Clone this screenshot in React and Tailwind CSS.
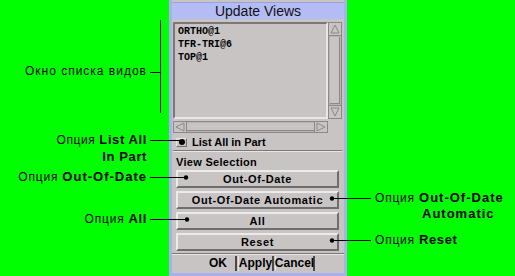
import React from "react";

const lav = "bg-[#b4bcf6]";

function Btn({ children }) {
  return (
    <div className="h-[18px] mx-[3px] flex items-center justify-center bg-[#c8c4c4] border-t-2 border-l-2 border-t-[#ecebeb] border-l-[#ecebeb] border-b-2 border-r-2 border-b-[#6f6d6d] border-r-[#6f6d6d] text-[11px] font-bold tracking-[0.6px] text-black">
      {children}
    </div>
  );
}

function Arrow({ dir }) {
  const pts = {
    up: "2,10 6,2 10,10",
    down: "2,2 6,10 10,2",
    left: "10,2 2,6 10,10",
    right: "2,2 10,6 2,10",
  }[dir];
  return (
    <svg width="12" height="12" viewBox="0 0 12 12">
      <polygon points={pts} fill="#c8c4c4" stroke="#8a8888" strokeWidth="1" />
    </svg>
  );
}

export default function App() {
  return (
    <div
      className="relative w-[515px] h-[276px] bg-[#00ff00] flex overflow-hidden"
      style={{ fontFamily: '"Liberation Sans", Arial, sans-serif' }}
    >
      <div className="w-[169px] shrink-0" />

      {/* dialog panel */}
      <div className="w-[178px] shrink-0 flex flex-col bg-[#c8c4c4] border-l-[3px] border-r-[3px] border-[#a8b0ee]">
        <div className="h-[3px] bg-[#c8c4c4] border-b border-[#9aa2e0]" />
        <div className={`h-[16px] ${lav} flex items-center justify-center text-[14px] text-[#111] leading-none`}>
          Update Views
        </div>

        <div className="flex flex-col pl-[1px] pr-[2px] pt-[3px]">
          <div className="flex h-[97px]">
            <div className="w-[155px] bg-[#c8c4c4] border-2 border-t-[#7a7878] border-l-[#7a7878] border-b-[#e8e6e6] border-r-[#e8e6e6] px-[3px] pt-[2px] flex flex-col gap-[2px] text-[10px] font-bold leading-[11px]" style={{ fontFamily: '"Liberation Mono", monospace' }}>
              <div>ORTHO@1</div>
              <div>TFR-TRI@6</div>
              <div>TOP@1</div>
            </div>
            <div className="w-[14px] flex flex-col bg-[#b8b4b4] border border-[#8a8888]">
              <div className="h-[13px] flex items-center justify-center bg-[#c8c4c4] border-b border-[#8a8888]"><Arrow dir="up" /></div>
              <div className="flex-1 mx-[1px] my-[1px] bg-[#c8c4c4] border-r border-b border-[#8a8888]" />
              <div className="h-[13px] flex items-center justify-center bg-[#c8c4c4] border-t border-[#8a8888]"><Arrow dir="down" /></div>
            </div>
          </div>

          <div className="mt-[2px] w-[155px] h-[12px] flex bg-[#b8b4b4] border border-[#8a8888]">
            <div className="w-[13px] flex items-center justify-center bg-[#c8c4c4] border-r border-[#8a8888]"><Arrow dir="left" /></div>
            <div className="flex-1 my-[1px] bg-[#c8c4c4] border-b border-[#8a8888]" />
            <div className="w-[13px] flex items-center justify-center bg-[#c8c4c4] border-l border-[#8a8888]"><Arrow dir="right" /></div>
          </div>

          <div className="mt-[4px] h-[10px] flex items-center gap-[5px] pl-[3px]">
            <div className="w-[11px] h-[9px] bg-[#c8c4c4] border border-t-[#e8e6e6] border-l-[#e8e6e6] border-b-[#6f6d6d] border-r-[#6f6d6d] flex items-center justify-center">
              <div className="w-[6px] h-[6px] rounded-full bg-black" />
            </div>
            <span className="text-[11px] font-bold leading-none">List All in Part</span>
          </div>

          <div className="mt-[3px] h-[2px] border-t border-[#7a7878] border-b border-b-[#e8e6e6]" />

          <div className="mt-[4px] pl-[3px] text-[11px] font-bold leading-[12px] tracking-[0.3px]">View Selection</div>

          <div className="mt-[2px] flex flex-col gap-[3px]">
            <Btn>Out-Of-Date</Btn>
            <Btn>Out-Of-Date Automatic</Btn>
            <Btn>All</Btn>
            <Btn>Reset</Btn>
          </div>
        </div>

        <div className="mt-[2px] h-[2px] border-t border-[#7a7878] border-b border-b-[#e8e6e6]" />
        <div className="flex-1 flex items-center justify-center gap-[1px] pb-[2px]">
          <div className="w-[36px] h-[15px] flex items-center justify-center text-[12px] font-bold border-r-2 border-[#4a4848]">OK</div>
          <div className="w-[36px] h-[15px] flex items-center justify-center text-[12px] font-bold border-l border-[#e8e6e6] border-r-2 border-r-[#4a4848]">Apply</div>
          <div className="w-[40px] h-[15px] flex items-center justify-center text-[12px] font-bold border-l border-[#e8e6e6] border-r-2 border-r-[#4a4848]">Cancel</div>
        </div>
        <div className="h-[3px] bg-[#a8b0ee]" />
      </div>

      <div className="flex-1" />

      {/* callout lines */}
      <svg className="absolute inset-0 pointer-events-none" width="515" height="276">
        <g stroke="#000" strokeWidth="1">
          <line x1="150" y1="72.5" x2="160" y2="72.5" />
          <line x1="160.5" y1="20" x2="160.5" y2="113" />
          <line x1="150" y1="140.5" x2="180" y2="140.5" />
          <line x1="150" y1="177.5" x2="186" y2="177.5" />
          <line x1="150" y1="219.5" x2="187" y2="219.5" />
          <line x1="332" y1="198.5" x2="371" y2="198.5" />
          <line x1="332" y1="240.5" x2="371" y2="240.5" />
        </g>
        <g fill="#000">
          <circle cx="186" cy="177.5" r="2.2" />
          <circle cx="187" cy="219.5" r="2.2" />
          <circle cx="332" cy="198.5" r="2.2" />
          <circle cx="332" cy="240.5" r="2.2" />
        </g>
      </svg>

      {/* callout labels */}
      <div className="absolute right-[368px] top-[65px] text-[12px] tracking-[1px] leading-none whitespace-nowrap">Окно списка видов</div>
      <div className="absolute right-[368px] top-[133px] text-[12px] leading-none whitespace-nowrap text-right">
        <span className="tracking-[0.6px]">Опция </span><span className="font-bold text-[13px] tracking-[0.6px]">List All</span>
      </div>
      <div className="absolute right-[368px] top-[150px] text-[13px] font-bold tracking-[0.6px] leading-none whitespace-nowrap">In Part</div>
      <div className="absolute right-[368px] top-[170px] text-[12px] leading-none whitespace-nowrap">
        <span className="tracking-[0.8px]">Опция </span><span className="font-bold text-[13px] tracking-[1px]">Out-Of-Date</span>
      </div>
      <div className="absolute right-[368px] top-[212px] text-[12px] leading-none whitespace-nowrap">
        <span className="tracking-[0.8px]">Опция </span><span className="font-bold text-[13px] tracking-[0.6px]">All</span>
      </div>
      <div className="absolute left-[375px] top-[191px] text-[12px] leading-none whitespace-nowrap">
        <span className="tracking-[0.8px]">Опция </span><span className="font-bold text-[13px] tracking-[1px]">Out-Of-Date</span>
      </div>
      <div className="absolute left-[422px] top-[207px] text-[13px] font-bold tracking-[1px] leading-none whitespace-nowrap">Automatic</div>
      <div className="absolute left-[375px] top-[233px] text-[12px] leading-none whitespace-nowrap">
        <span className="tracking-[0.8px]">Опция </span><span className="font-bold text-[13px] tracking-[0.6px]">Reset</span>
      </div>
    </div>
  );
}
